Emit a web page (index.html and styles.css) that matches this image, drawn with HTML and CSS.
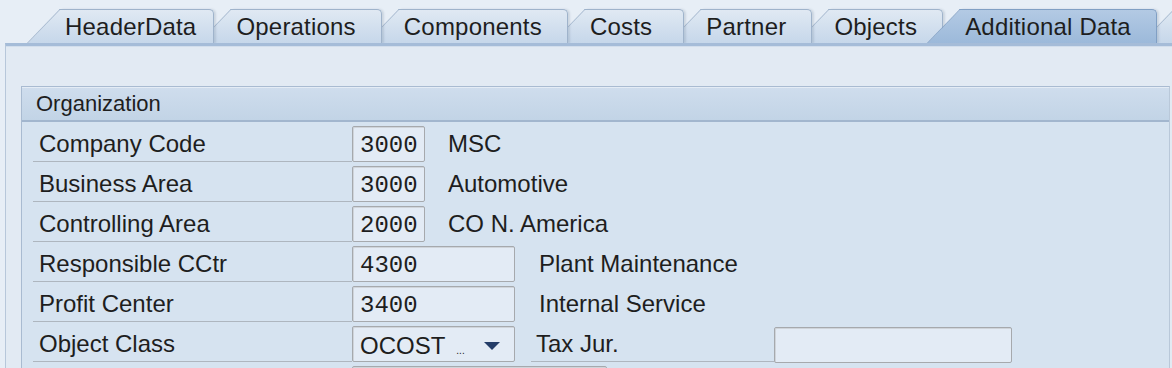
FILE: index.html
```html
<!DOCTYPE html>
<html lang="en">
<head>
  <meta charset="UTF-8" />
  <title>Order - Additional Data</title>
  <link rel="stylesheet" href="styles.css">
</head>

<body>
  <div class="screen">
    <!-- tab strip -->
    <div class="tabstrip">
      <div class="tab t1">HeaderData</div>
      <div class="tab t2">Operations</div>
      <div class="tab t3">Components</div>
      <div class="tab t4">Costs</div>
      <div class="tab t5">Partner</div>
      <div class="tab t6">Objects</div>
      <div class="tab active">Additional Data</div>
      <div class="tab t8"></div>
    </div>

    <!-- tab page -->
    <div class="panel">
      <div class="group">
        <div class="group-head">Organization</div>
        <div class="group-body">
          <div class="row">
            <div class="lbl">Company Code</div>
            <div class="field short mono">3000</div>
            <div class="desc">MSC</div>
          </div>
          <div class="row">
            <div class="lbl">Business Area</div>
            <div class="field short mono">3000</div>
            <div class="desc">Automotive</div>
          </div>
          <div class="row">
            <div class="lbl">Controlling Area</div>
            <div class="field short mono">2000</div>
            <div class="desc">CO N. America</div>
          </div>
          <div class="row">
            <div class="lbl">Responsible CCtr</div>
            <div class="field long mono">4300</div>
            <div class="desc wide">Plant Maintenance</div>
          </div>
          <div class="row">
            <div class="lbl">Profit Center</div>
            <div class="field long mono">3400</div>
            <div class="desc wide">Internal Service</div>
          </div>
          <div class="row">
            <div class="lbl">Object Class</div>
            <div class="field long select">
              <span class="sel-text">OCOST</span>
              <span class="sel-more">...</span>
              <span class="sel-arrow"></span>
            </div>
            <div class="lbl lbl2">Tax Jur.</div>
            <div class="field tax"></div>
          </div>
          <div class="row next">
            <div class="field extra"></div>
          </div>
        </div>
      </div>
    </div>
  </div>
</body>
</html>
```

FILE: styles.css
```css
body {
  margin: 0;
  padding: 0;
  background: #e7eef6;
  font-family: "Liberation Sans", Arial, sans-serif;
  color: #1e1e1e;
  overflow: hidden;
}

.screen {
  width: 1172px;
  height: 368px;
  overflow: hidden;
}

/* tabs */
.tabstrip {
  display: flex;
  height: 34px;
  padding: 9px 0 0 27px;
  overflow: hidden;
}

.tab {
  position: relative;
  flex-shrink: 0;
  height: 34px;
  line-height: 36px;
  padding: 0 26px 0 38px;
  margin-right: -16px;
  font-size: 24px;
  letter-spacing: 0.2px;
  white-space: nowrap;
}
.tab::before,
.tab::after {
  content: '';
  position: absolute;
  top: 0;
  bottom: 0;
  z-index: -1;
  background: linear-gradient(to bottom, #e0e9f3, #c6d7ea);
  border-top: 1px solid #9fb3cb;
}
/* slanted left edge */
.tab::before {
  left: 0;
  width: 50px;
  border-left: 1px solid #9fb3cb;
  transform: skewX(-44deg);
  transform-origin: bottom left;
}
.tab::after {
  left: 33px;
  right: 0;
  border-right: 1px solid #9fb3cb;
  border-top-right-radius: 5px;
  box-shadow: 2px 0 2px rgba(80, 100, 130, 0.18);
}

.t1 { z-index: 8; padding-right: 18px; }
.t2 { z-index: 7; }
.t3 { z-index: 6; }
.t4 { z-index: 5; padding-right: 32px; }
.t5 { z-index: 4; }
.t6 { z-index: 3; }
.t8 { z-index: 1; width: 80px; }

.tab.active { z-index: 10; }
.tab.active::before,
.tab.active::after {
  background: linear-gradient(to bottom, #b3cae4, #9cb9da);
  border-color: #809fc4;
}

/* tab page */
.panel {
  margin-left: 5px;
  height: 330px;
  background: #e2eaf3;
  border-left: 1px solid #b7c7da;
  border-top: 3px solid #a5bcd8;
  box-shadow: inset 0 1px 0 #d2deec;
  padding: 40px 0 0 15px;
}

/* group box */
.group {
  width: 1147px;
  border: 1px solid #a9bbd1;
  border-right: 1px solid #b9c8d9;
  background: #d6e3f0;
}

.group-head {
  height: 33px;
  line-height: 33px;
  padding-left: 14px;
  font-size: 22px;
  background: linear-gradient(to bottom, #cfdded, #c2d4e6);
  box-shadow: inset 0 1px 0 #e4ecf5;
  border-bottom: 2px solid #a2b6ce;
}

.group-body {
  padding-left: 11px;
}

.row {
  display: flex;
  align-items: flex-end;
  height: 40px;
}

.lbl {
  width: 313px;
  height: 39px;
  line-height: 44px;
  padding-left: 6px;
  font-size: 24px;
  border-bottom: 1px solid #aeb6bf;
  white-space: nowrap;
}

.field {
  height: 34px;
  background: #e3ebf5;
  border: 1px solid #a6a9ad;
  border-radius: 2px;
  box-shadow: inset 1px 1px 0 #cfd4da;
  font-size: 24px;
  line-height: 38px;
  padding-left: 7px;
  box-sizing: content-box;
}
.field.mono {
  font-family: "Liberation Mono", "Courier New", monospace;
}
.field.short { width: 64px; }
.field.long { width: 154px; }

.desc {
  height: 40px;
  line-height: 44px;
  margin-left: 23px;
  font-size: 24px;
  white-space: nowrap;
}
.desc.wide { margin-left: 24px; }

/* dropdown */
.field.select {
  display: flex;
  align-items: center;
  font-size: 24px;
}
.sel-text {
  line-height: 38px;
  padding-top: 3px;
}
.sel-more {
  font-size: 10px;
  margin: 14px 0 0 11px;
}
.sel-arrow {
  width: 0;
  height: 0;
  margin: 3px 0 0 19px;
  border-left: 8px solid transparent;
  border-right: 8px solid transparent;
  border-top: 8px solid #243d68;
}

.lbl2 {
  width: 238px;
  margin-left: 16px;
  padding-left: 5px;
}
.field.tax {
  width: 229px;
  margin-bottom: -1px;
}

/* top of the following row, cut by the window */
.row.next {
  align-items: flex-start;
  padding: 4px 0 0 319px;
}
.field.extra {
  width: 246px;
}
```
